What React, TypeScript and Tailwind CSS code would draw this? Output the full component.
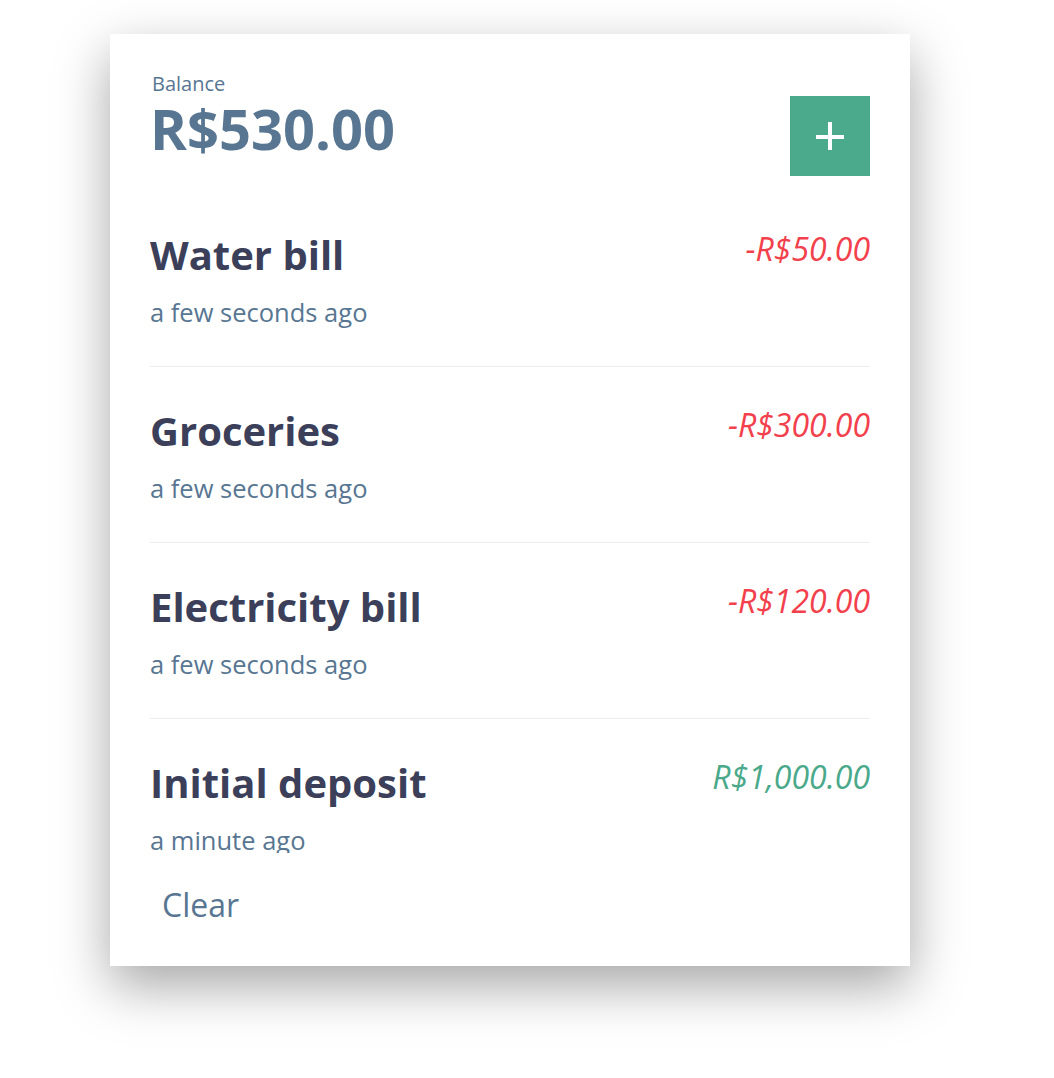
import { useState } from "react";

type Entry = {
  id: number;
  title: string;
  when: string;
  amount: number;
};

const initialEntries: Entry[] = [
  { id: 4, title: "Water bill", when: "a few seconds ago", amount: -50 },
  { id: 3, title: "Groceries", when: "a few seconds ago", amount: -300 },
  { id: 2, title: "Electricity bill", when: "a few seconds ago", amount: -120 },
  { id: 1, title: "Initial deposit", when: "a minute ago", amount: 1000 },
];

// R$ formatting, negatives get a leading minus
const money = (value: number) =>
  (value < 0 ? "-" : "") +
  "R$" +
  Math.abs(value).toLocaleString("en-US", {
    minimumFractionDigits: 2,
    maximumFractionDigits: 2,
  });

export default function App() {
  const [entries, setEntries] = useState<Entry[]>(initialEntries);

  const balance = entries.reduce((sum, entry) => sum + entry.amount, 0);

  return (
    <div
      className="min-h-screen bg-white pt-[34px] pl-[110px]"
      style={{ fontFamily: '"Open Sans", "Noto Sans", sans-serif' }}>
      <div className="w-[800px] bg-white px-10 pt-[38px] pb-[43px] shadow-[0_20px_50px_rgba(0,0,0,0.35)]">
        <div className="flex items-start justify-between">
          <div>
            <p className="pl-[2px] text-[20px] leading-[24px] text-[#587692]">Balance</p>
            <h1 className="mt-1 text-[56px] leading-[56px] font-bold text-[#587692]">
              {money(balance)}
            </h1>
          </div>
          <button
            className="mt-6 flex h-20 w-20 items-center justify-center bg-[#4aaa8b]"
            aria-label="Add entry">
            <svg width="28" height="28" viewBox="0 0 28 28">
              <rect x="12" y="0" width="4" height="28" fill="white" />
              <rect x="0" y="13" width="28" height="4" fill="white" />
            </svg>
          </button>
        </div>

        <div className="mt-[15px] h-[662px] overflow-hidden">
          {entries.map((entry) => (
            <div
              key={entry.id}
              className="flex items-start justify-between border-b border-[#ececec] pt-10 pb-[38px]">
              <div>
                <h2 className="text-[40px] leading-[48px] font-bold text-[#3c3f59]">
                  {entry.title}
                </h2>
                <p className="mt-[17px] text-[25.5px] leading-[32px] text-[#587692]">
                  {entry.when}
                </p>
              </div>
              <span
                className={
                  entry.amount < 0
                    ? "text-[32px] leading-[36px] italic text-[#f2414c]"
                    : "text-[32px] leading-[36px] italic text-[#4aa98a]"
                }>
                {money(entry.amount)}
              </span>
            </div>
          ))}
        </div>

        <button
          className="mt-[34px] px-3 text-[32px] leading-[36px] text-[#587692]"
          onClick={() => setEntries([])}>
          Clear
        </button>
      </div>
    </div>
  );
}
